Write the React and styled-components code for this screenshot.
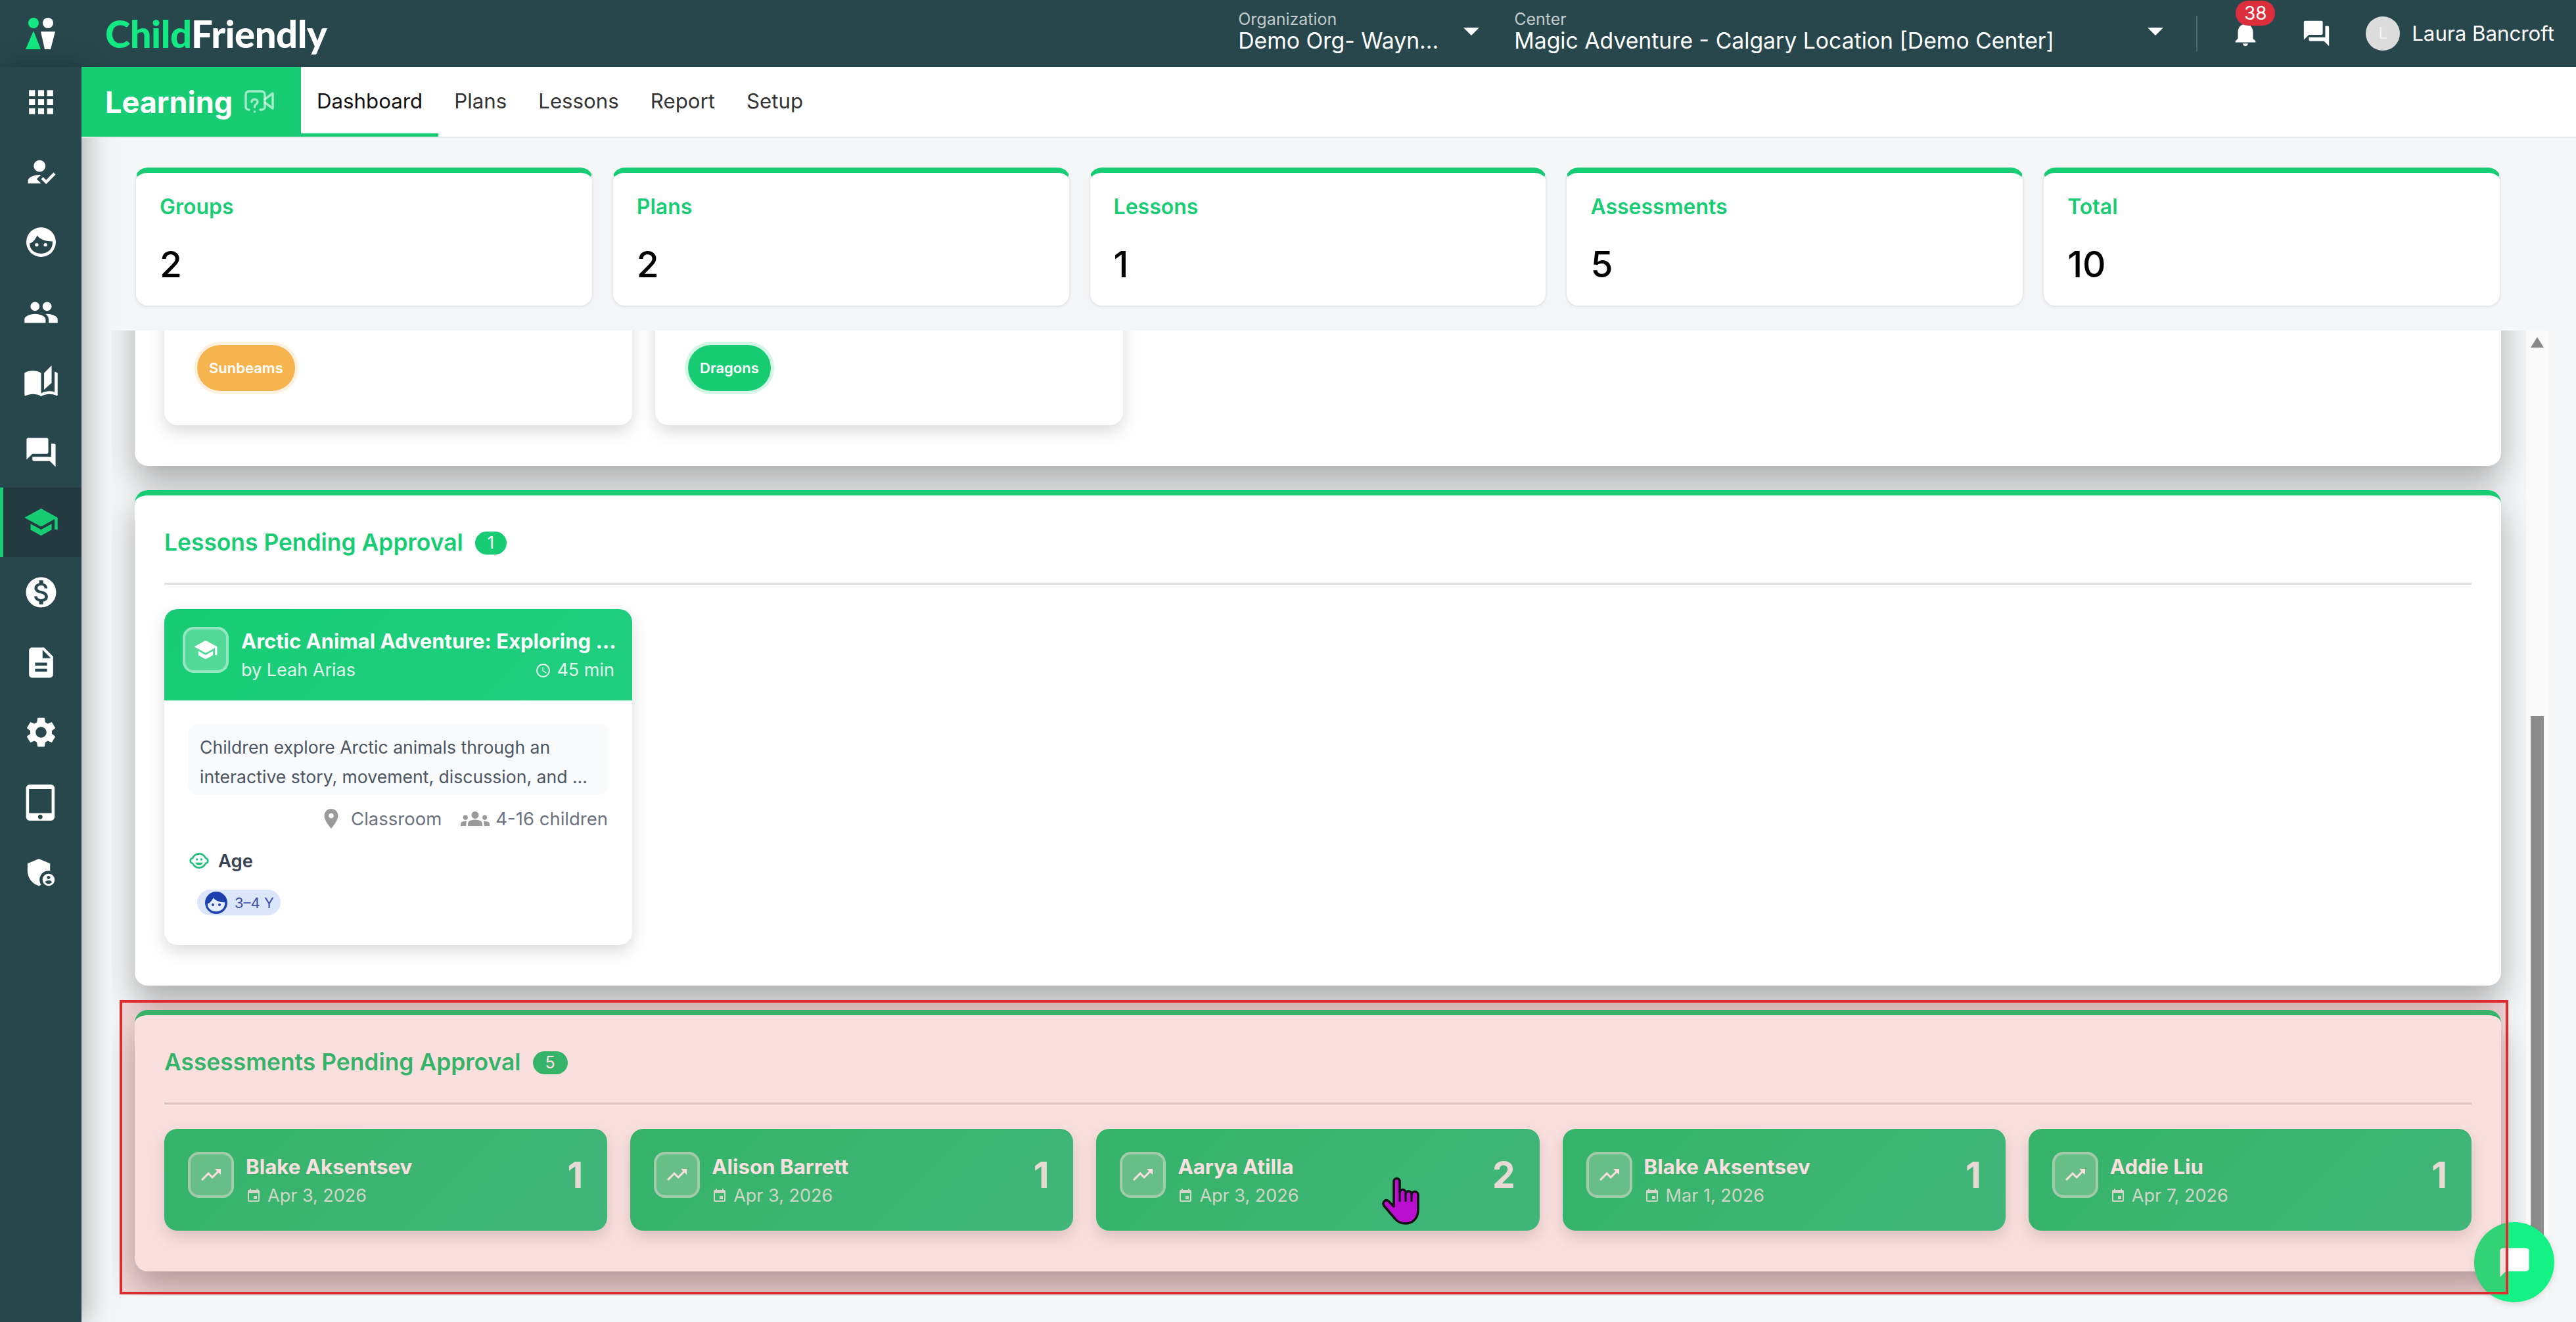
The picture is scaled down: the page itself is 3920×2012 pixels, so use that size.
import React, { useLayoutEffect, useRef } from "react";
import styled, { createGlobalStyle } from "styled-components";
import {
  MdApps,
  MdHowToReg,
  MdPeople,
  MdAutoStories,
  MdQuestionAnswer,
  MdSchool,
  MdMonetizationOn,
  MdDescription,
  MdSettings,
  MdTabletMac,
  MdAdminPanelSettings,
  MdNotifications,
  MdAccessTime,
  MdPlace,
  MdGroups,
  MdChildCare,
  MdTrendingUp,
  MdEvent,
  MdChatBubble,
} from "react-icons/md";

const GREEN = "#18cc74";
const DARK = "#28474c";

const GlobalStyle = createGlobalStyle`
  html, body {
    margin: 0;
    height: 100%;
    overflow: hidden;
    font-family: Inter, "Liberation Sans", sans-serif;
    background: #f5f6f7;
  }
  #root { height: 100%; }
  * { box-sizing: border-box; }
`;

const Page = styled.div`
  position: relative;
  height: 100vh;
  display: flex;
  flex-direction: column;
  overflow: hidden;
`;

/* top bar */
const Header = styled.header`
  height: 102px;
  flex: none;
  display: flex;
  align-items: center;
  background: ${DARK};
  color: #fff;
  padding-right: 33px;
`;

const LogoMark = styled.div`
  width: 124px;
  display: flex;
  justify-content: center;
`;

const LogoText = styled.div`
  margin-left: 36px;
  font-family: Lato, sans-serif;
  font-weight: 900;
  font-size: 58px;
  letter-spacing: -0.5px;
  line-height: 1;
  color: #fff;
  span { color: #14e882; }
`;

const HeaderRight = styled.div`
  margin-left: auto;
  display: flex;
  align-items: center;
`;

const Selector = styled.div`
  width: ${(p) => p.$width}px;
  margin-right: ${(p) => p.$gap}px;
  padding-bottom: 6px;
  display: flex;
  justify-content: space-between;
  align-items: center;
`;

const SelectorLabel = styled.div`
  font-size: 25px;
  line-height: 28px;
  color: rgba(255, 255, 255, 0.72);
`;

const SelectorValue = styled.div`
  font-size: 33.75px;
  line-height: 38px;
  white-space: nowrap;
`;

const Caret = styled.div`
  width: 0;
  height: 0;
  border-left: 12px solid transparent;
  border-right: 12px solid transparent;
  border-top: 12px solid #fff;
`;

const HeaderDivider = styled.div`
  width: 2px;
  height: 54px;
  background: rgba(255, 255, 255, 0.18);
  margin-right: 50px;
`;

const BellWrap = styled.div`
  position: relative;
  display: flex;
  margin-right: 62px;
  svg { display: block; }
`;

const CountBadge = styled.div`
  position: absolute;
  left: 8px;
  top: -27px;
  width: 60px;
  height: 38px;
  border-radius: 19px;
  background: #dc2f3c;
  font-size: 28px;
  line-height: 38px;
  text-align: center;
`;

const Avatar = styled.div`
  width: 52px;
  height: 52px;
  border-radius: 50%;
  margin: 0 18px 0 52px;
  background: #dcdcdc;
  color: #f5f5f5;
  font-size: 24px;
  line-height: 52px;
  text-align: center;
`;

const UserName = styled.div`
  font-size: 31.25px;
  white-space: nowrap;
`;

/* body */
const Body = styled.div`
  flex: 1;
  min-height: 0;
  display: flex;
`;

const Sidebar = styled.nav`
  width: 124px;
  flex: none;
  background: ${DARK};
  box-shadow: 8px 0 40px rgba(0, 0, 0, 0.28);
  position: relative;
  z-index: 1;
`;

const SideItem = styled.div`
  height: 106.6px;
  display: flex;
  align-items: center;
  justify-content: center;
  color: ${(p) => (p.$active ? GREEN : "#fff")};
  background: ${(p) => (p.$active ? "#233a40" : "transparent")};
  box-shadow: ${(p) => (p.$active ? `inset 5px 0 0 ${GREEN}` : "none")};
`;

const Main = styled.div`
  flex: 1;
  min-width: 0;
  display: flex;
  flex-direction: column;
`;

const SubNav = styled.div`
  height: 108px;
  flex: none;
  display: flex;
  background: #fff;
  border-bottom: 2px solid #e6e7e8;
  position: relative;
  z-index: 2;
`;

const ModuleTitle = styled.div`
  width: 334px;
  height: 106px;
  display: flex;
  align-items: center;
  gap: 18px;
  padding-left: 36px;
  background: ${GREEN};
  color: #fff;
  font-size: 45px;
  font-weight: 700;
`;

const Tab = styled.div`
  height: 106px;
  padding: 3px 24px 0;
  display: flex;
  align-items: center;
  font-size: 31.25px;
  color: ${(p) => (p.$active ? "#111" : "#333")};
  border-bottom: 5px solid ${(p) => (p.$active ? GREEN : "transparent")};
`;

const Content = styled.div`
  flex: 1;
  min-height: 0;
  display: flex;
  flex-direction: column;
  padding-bottom: 40px;
  background: #f5f6f7;
`;

const StatsRow = styled.div`
  flex: none;
  display: grid;
  grid-template-columns: repeat(5, 1fr);
  gap: 28px;
  padding: 45px 114px 36px 81px;
`;

const StatCard = styled.div`
  height: 212px;
  padding: 30px 36px 0;
  background: #fff;
  border: 2px solid #e8eaee;
  border-top: 8px solid ${GREEN};
  border-radius: 20px;
  box-shadow: 0 2px 4px rgba(0, 0, 0, 0.04);
`;

const StatLabel = styled.div`
  font-size: 32px;
  line-height: 44px;
  font-weight: 600;
  color: ${GREEN};
`;

const StatValue = styled.div`
  margin-top: 30px;
  font-size: 55px;
  line-height: 70px;
  font-weight: 500;
  color: #000;
`;

/* scrolled panel, the browser's own scrollbar is replaced by the drawn track */
const PanelWrap = styled.div`
  position: relative;
  flex: 1;
  min-height: 0;
  margin: 0 42px 0 46px;
`;

const ScrollPanel = styled.div`
  height: 100%;
  padding: 0 72px 37px 35px;
  overflow-y: scroll;
  scrollbar-width: none;
  display: flex;
  flex-direction: column;
  gap: 37px;
`;

const ScrollTrack = styled.div`
  position: absolute;
  top: 0;
  right: 0;
  bottom: 0;
  width: 34px;
  background: #fafafa;
`;

const ScrollArrow = styled.div`
  position: absolute;
  top: 10px;
  left: 7px;
  width: 0;
  height: 0;
  border-left: 10px solid transparent;
  border-right: 10px solid transparent;
  border-bottom: 16px solid #888;
`;

const ScrollThumb = styled.div`
  position: absolute;
  top: 587px;
  bottom: 34px;
  left: 7px;
  right: 7px;
  background: #8c8c8c;
`;

const Section = styled.section`
  flex: none;
  padding: 49px 45px 62px;
  background: #fff;
  border-top: 8px solid ${GREEN};
  border-radius: 20px;
  box-shadow: 0 25px 50px rgba(0, 0, 0, 0.3);
`;

const GroupsSection = styled(Section)`
  height: 1163px;
  display: flex;
  align-items: flex-end;
  gap: 35px;
`;

const GroupCard = styled.div`
  width: 712px;
  height: 300px;
  padding: 178px 0 0 50px;
  background: #fff;
  border-radius: 20px;
  box-shadow: 0 10px 24px rgba(0, 0, 0, 0.14);
`;

const GroupPill = styled.div`
  display: inline-block;
  height: 70px;
  padding: 0 18px;
  border-radius: 35px;
  background: ${(p) => p.$color};
  box-shadow: 0 0 0 5px ${(p) => p.$color}2e;
  color: #fff;
  font-size: 22px;
  font-weight: 600;
  line-height: 70px;
`;

const SectionHead = styled.div`
  height: 84px;
  display: flex;
  align-items: flex-start;
  gap: 18px;
  margin-bottom: 37px;
  border-bottom: 3px solid #dedfe0;
  box-sizing: content-box;
`;

const SectionTitle = styled.h2`
  margin: 0;
  font-size: 35.4px;
  line-height: 46px;
  font-weight: 600;
  color: ${GREEN};
`;

const HeadBadge = styled.span`
  height: 35px;
  margin-top: 6px;
  padding: 0 19px;
  border-radius: 18px;
  background: ${GREEN};
  color: #fff;
  font-size: 25px;
  line-height: 35px;
`;

const LessonCard = styled.div`
  width: 712px;
  height: 511px;
  background: #fff;
  border-radius: 20px;
  box-shadow: 0 10px 24px rgba(0, 0, 0, 0.14);
  overflow: hidden;
`;

const LessonHeader = styled.div`
  height: 139px;
  display: flex;
  gap: 19px;
  padding: 27px 27px 0 28px;
  background: linear-gradient(135deg, ${GREEN}, #20ce80);
  color: #fff;
`;

const IconBox = styled.div`
  width: 70px;
  height: 70px;
  flex: none;
  display: flex;
  align-items: center;
  justify-content: center;
  border: 4px solid rgba(255, 255, 255, 0.4);
  border-radius: 17px;
  background: rgba(255, 255, 255, 0.25);
  color: #fff;
`;

const LessonHeadText = styled.div`
  flex: 1;
  min-width: 0;
`;

const LessonTitle = styled.div`
  font-size: 31px;
  line-height: 44px;
  font-weight: 700;
  white-space: nowrap;
`;

const LessonByRow = styled.div`
  display: flex;
  justify-content: space-between;
  font-size: 27px;
  line-height: 44px;
  color: rgba(255, 255, 255, 0.88);
`;

const Duration = styled.span`
  display: flex;
  align-items: center;
  gap: 8px;
`;

const LessonBody = styled.div`
  padding: 36px 37px 0;
`;

const Description = styled.div`
  height: 107px;
  padding: 13px 17px 0;
  border-radius: 12px;
  background: #f9fafb;
  font-size: 26.6px;
  line-height: 45px;
  color: #4b5563;
  white-space: nowrap;
`;

const MetaRow = styled.div`
  display: flex;
  justify-content: flex-end;
  align-items: center;
  height: 74px;
  font-size: 27.5px;
  color: #6b7280;
`;

const MetaItem = styled.span`
  display: flex;
  align-items: center;
  gap: ${(p) => p.$gap}px;
  margin-left: 29px;
  svg { color: #9a9a9a; }
`;

const AgeLabel = styled.div`
  display: flex;
  align-items: center;
  gap: 13px;
  height: 54px;
  font-size: 27.5px;
  font-weight: 600;
  color: #374151;
  svg { color: #22c07a; }
`;

const AgeChip = styled.div`
  display: inline-flex;
  align-items: center;
  gap: 11px;
  height: 39px;
  margin: 17px 0 0 13px;
  padding: 0 10px 0 12px;
  border-radius: 20px;
  background: #dbe6fb;
  color: #3b4fa5;
  font-size: 22px;
`;

const AssessmentGrid = styled.div`
  display: grid;
  grid-template-columns: repeat(5, 1fr);
  gap: 35px;
`;

const AssessmentCard = styled.div`
  height: 155px;
  display: flex;
  gap: 18px;
  padding: 35px 37px 35px 36px;
  border-radius: 20px;
  background: linear-gradient(135deg, ${GREEN}, #26cf88);
  box-shadow: 0 10px 24px rgba(0, 0, 0, 0.14);
  color: #fff;
`;

const AssessmentText = styled.div`
  flex: 1;
  min-width: 0;
`;

const AssessmentName = styled.div`
  font-size: 31.25px;
  line-height: 46px;
  font-weight: 700;
  white-space: nowrap;
`;

const AssessmentDate = styled.div`
  display: flex;
  align-items: center;
  gap: 9px;
  margin-top: 2px;
  font-size: 27px;
  line-height: 38px;
  color: rgba(255, 255, 255, 0.8);
`;

const AssessmentCount = styled.div`
  font-size: 55px;
  line-height: 70px;
  font-weight: 700;
  opacity: 0.9;
`;

/* things lying over the page */
const ChatBubble = styled.div`
  position: absolute;
  right: 33px;
  bottom: 30px;
  width: 122px;
  height: 122px;
  display: flex;
  align-items: center;
  justify-content: center;
  border-radius: 50%;
  background: #14f185;
  box-shadow: 0 3px 10px rgba(0, 0, 0, 0.12);
  color: #fff;
  z-index: 3;
`;

const Highlight = styled.div`
  position: absolute;
  left: 182px;
  top: 1522px;
  width: 3635px;
  height: 448px;
  border: 4px solid #dc2a2e;
  background: rgba(220, 38, 38, 0.15);
  pointer-events: none;
  z-index: 4;
`;

const Cursor = styled.svg`
  position: absolute;
  left: 2102px;
  top: 1791px;
  z-index: 5;
`;

/* drawings */
const Logo = () => (
  <svg width="46" height="50" viewBox="0 0 46 50">
    <circle cx="12" cy="9" r="8" fill="#14e882" />
    <circle cx="34" cy="9" r="8" fill="#fff" />
    <path d="M12 21 L23 49 H0 Z" fill="#14e882" />
    <path d="M23 22 H45 L38 49 H29 Z" fill="#fff" />
  </svg>
);

const KidFace = ({ size, ring, face, eye }) => (
  <svg width={size} height={size} viewBox="0 0 44 44">
    <circle cx="22" cy="22" r="22" fill={ring} />
    <path d="M5 24 C9 23 14 18 16 12 C21 19 31 21 39 21 C40 32 32 39 22 39 C12 39 5 33 5 24 Z" fill={face} />
    <circle cx="15.5" cy="26" r="2.6" fill={eye} />
    <circle cx="28.5" cy="26" r="2.6" fill={eye} />
  </svg>
);

const HelpVideo = () => (
  <svg width="46" height="36" viewBox="0 0 46 36" fill="none" stroke="#fff" strokeOpacity="0.6" strokeWidth="3.5" strokeLinecap="round" strokeLinejoin="round">
    <path d="M7 30 C4 30 2 28 2 26 V7 C2 4 4 2 7 2 H26 C29 2 31 4 31 7 V26 C31 28 29 30 26 30 H24" />
    <path d="M31 14 L43 5 V28 L31 19" />
    <path d="M11 18 C11 13 20 13 20 18 C20 22 15.500 21 15.500 26" />
    <path d="M15.500 33 V33.100" />
  </svg>
);

const sideIcons = [
  <MdApps size={55} />,
  <MdHowToReg size={53} />,
  <KidFace size={45} ring="#fff" face={DARK} eye="#fff" />,
  <MdPeople size={55} />,
  <MdAutoStories size={55} />,
  <MdQuestionAnswer size={53} />,
  <MdSchool size={55} />,
  <MdMonetizationOn size={55} />,
  <MdDescription size={55} />,
  <MdSettings size={55} />,
  <MdTabletMac size={55} />,
  <MdAdminPanelSettings size={55} />,
];

const tabs = ["Dashboard", "Plans", "Lessons", "Report", "Setup"];

const stats = [
  ["Groups", 2],
  ["Plans", 2],
  ["Lessons", 1],
  ["Assessments", 5],
  ["Total", 10],
];

const assessments = [
  ["Blake Aksentsev", "Apr 3, 2026", 1],
  ["Alison Barrett", "Apr 3, 2026", 1],
  ["Aarya Atilla", "Apr 3, 2026", 2],
  ["Blake Aksentsev", "Mar 1, 2026", 1],
  ["Addie Liu", "Apr 7, 2026", 1],
];

export default function App() {
  const panel = useRef(null);

  useLayoutEffect(() => {
    panel.current.scrollTop = panel.current.scrollHeight;
  }, []);

  return (
    <Page>
      <GlobalStyle />
      <Header>
        <LogoMark>
          <Logo />
        </LogoMark>
        <LogoText>
          <span>Child</span>Friendly
        </LogoText>
        <HeaderRight>
          <Selector $width={367} $gap={53}>
            <div>
              <SelectorLabel>Organization</SelectorLabel>
              <SelectorValue>Demo Org- Wayn...</SelectorValue>
            </div>
            <Caret />
          </Selector>
          <Selector $width={988} $gap={50}>
            <div>
              <SelectorLabel>Center</SelectorLabel>
              <SelectorValue>Magic Adventure - Calgary Location [Demo Center]</SelectorValue>
            </div>
            <Caret />
          </Selector>
          <HeaderDivider />
          <BellWrap>
            <MdNotifications size={46} />
            <CountBadge>38</CountBadge>
          </BellWrap>
          <MdQuestionAnswer size={46} />
          <Avatar>L</Avatar>
          <UserName>Laura Bancroft</UserName>
        </HeaderRight>
      </Header>

      <Body>
        <Sidebar>
          {sideIcons.map((icon, i) => (
            <SideItem key={i} $active={i === 6}>
              {icon}
            </SideItem>
          ))}
        </Sidebar>

        <Main>
          <SubNav>
            <ModuleTitle>
              Learning
              <HelpVideo />
            </ModuleTitle>
            {tabs.map((t, i) => (
              <Tab key={t} $active={i === 0}>
                {t}
              </Tab>
            ))}
          </SubNav>

          <Content>
            <StatsRow>
              {stats.map(([label, value]) => (
                <StatCard key={label}>
                  <StatLabel>{label}</StatLabel>
                  <StatValue>{value}</StatValue>
                </StatCard>
              ))}
            </StatsRow>

            <PanelWrap>
              <ScrollPanel ref={panel}>
                <GroupsSection>
                  <GroupCard>
                    <GroupPill $color="#f6b44f">Sunbeams</GroupPill>
                  </GroupCard>
                  <GroupCard>
                    <GroupPill $color={GREEN}>Dragons</GroupPill>
                  </GroupCard>
                </GroupsSection>

                <Section>
                  <SectionHead>
                    <SectionTitle>Lessons Pending Approval</SectionTitle>
                    <HeadBadge>1</HeadBadge>
                  </SectionHead>
                  <LessonCard>
                    <LessonHeader>
                      <IconBox>
                        <MdSchool size={38} />
                      </IconBox>
                      <LessonHeadText>
                        <LessonTitle>Arctic Animal Adventure: Exploring ...</LessonTitle>
                        <LessonByRow>
                          by Leah Arias
                          <Duration>
                            <MdAccessTime size={25} />
                            45 min
                          </Duration>
                        </LessonByRow>
                      </LessonHeadText>
                    </LessonHeader>
                    <LessonBody>
                      <Description>
                        Children explore Arctic animals through an
                        <br />
                        interactive story, movement, discussion, and ...
                      </Description>
                      <MetaRow>
                        <MetaItem $gap={12}>
                          <MdPlace size={36} />
                          Classroom
                        </MetaItem>
                        <MetaItem $gap={9}>
                          <MdGroups size={44} />
                          4-16 children
                        </MetaItem>
                      </MetaRow>
                      <AgeLabel>
                        <MdChildCare size={32} />
                        Age
                      </AgeLabel>
                      <AgeChip>
                        <KidFace size={34} ring="#1e40af" face="#e4ecfd" eye="#1e40af" />
                        3–4 Y
                      </AgeChip>
                    </LessonBody>
                  </LessonCard>
                </Section>

                <Section>
                  <SectionHead>
                    <SectionTitle>Assessments Pending Approval</SectionTitle>
                    <HeadBadge>5</HeadBadge>
                  </SectionHead>
                  <AssessmentGrid>
                    {assessments.map(([name, date, count], i) => (
                      <AssessmentCard key={i}>
                        <IconBox>
                          <MdTrendingUp size={36} />
                        </IconBox>
                        <AssessmentText>
                          <AssessmentName>{name}</AssessmentName>
                          <AssessmentDate>
                            <MdEvent size={24} />
                            {date}
                          </AssessmentDate>
                        </AssessmentText>
                        <AssessmentCount>{count}</AssessmentCount>
                      </AssessmentCard>
                    ))}
                  </AssessmentGrid>
                </Section>
              </ScrollPanel>
              <ScrollTrack>
                <ScrollArrow />
                <ScrollThumb />
              </ScrollTrack>
            </PanelWrap>
          </Content>
        </Main>
      </Body>

      <ChatBubble>
        <MdChatBubble size={53} />
      </ChatBubble>
      <Highlight />
      <Cursor width="60" height="74" viewBox="0 0 60 74">
        <path
          d="M19 7 a4.500 4.500 0 0 1 9 0 V24 a4 4 0 0 1 9 0 V26 a4 4 0 0 1 9 1 a4.500 4.500 0 0 1 10 1 V50 C56 64 47 71 37 71 C30 71 25 69 21 64 L4 44 C1 39 6 33 11 37 L19 45 Z"
          fill="#b90ed0"
          stroke="#111"
          strokeWidth="3.500"
          strokeLinejoin="round"
        />
        <path d="M28 24 V38 M37 26 V38 M46 28 V38" stroke="#111" strokeWidth="3" fill="none" />
      </Cursor>
    </Page>
  );
}
